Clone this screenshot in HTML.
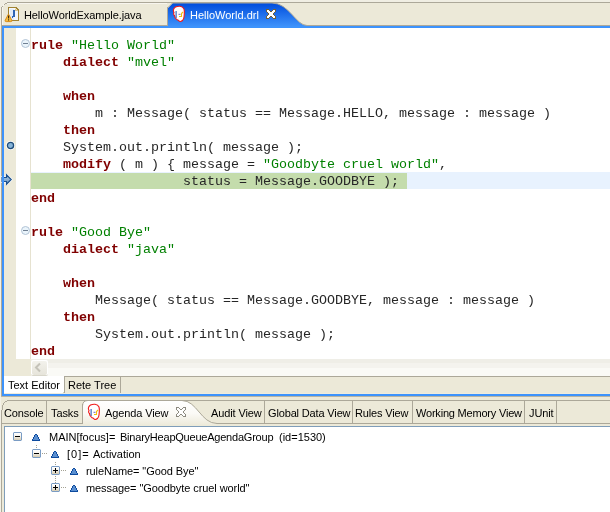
<!DOCTYPE html>
<html><head><meta charset="utf-8">
<style>
*{margin:0;padding:0;box-sizing:border-box}
html,body{width:610px;height:512px;overflow:hidden;background:#ECE9D8;position:relative;font-family:"Liberation Sans",sans-serif;font-size:11px;color:#000}
.a{position:absolute}
.t{position:absolute;line-height:13px;white-space:nowrap;will-change:transform}
pre{font-family:"Liberation Mono",monospace;font-size:13.33px;line-height:17px;white-space:pre;will-change:transform;color:#262626}
.k{color:#800000;font-weight:bold}
.s{color:#008000}
svg{position:absolute;overflow:visible}
</style></head><body>

<!-- ============ TOP TAB BAR ============ -->
<div class="a" style="left:0;top:0;width:1px;height:512px;background:#F3F1E7"></div>
<div class="a" style="left:0;top:0;width:610px;height:2px;background:#F0EEE3"></div>
<svg style="left:0;top:0" width="610" height="30" shape-rendering="crispEdges">
  <!-- top line -->
  <rect x="7" y="2" width="603" height="1" fill="#ACA899"/>
  <!-- inactive tab corner -->
  <rect x="0" y="0" width="7" height="2" fill="#F0EEE3"/>
  <rect x="0" y="2" width="1" height="6" fill="#F0EEE3"/>
  <rect x="1" y="2" width="6" height="1" fill="#F0EEE3"/>
  <rect x="1" y="3" width="4" height="1" fill="#F0EEE3"/>
  <rect x="1" y="4" width="3" height="1" fill="#F0EEE3"/>
  <rect x="1" y="5" width="2" height="1" fill="#F0EEE3"/>
  <rect x="1" y="6" width="1" height="1" fill="#F0EEE3"/>
  <rect x="5" y="3" width="2" height="1" fill="#ACA899"/>
  <rect x="4" y="4" width="1" height="1" fill="#ACA899"/>
  <rect x="3" y="5" width="1" height="1" fill="#ACA899"/>
  <rect x="2" y="6" width="1" height="1" fill="#ACA899"/>
  <rect x="1" y="7" width="1" height="389" fill="#ACA899"/>
  <rect x="2" y="7" width="1" height="18" fill="#F7F5EE"/>
  <rect x="3" y="4" width="1" height="2" fill="#F7F5EE"/>
  <rect x="5" y="3" width="0" height="0" fill="#F7F5EE"/>
  <rect x="7" y="3" width="160" height="1" fill="#F7F5EE"/>
  <!-- inactive tab right + bottom -->
  <rect x="167" y="7" width="1" height="19" fill="#ACA899"/>
  <rect x="1" y="25" width="609" height="1" fill="#ACA899"/>
</svg>
<!-- active tab -->
<svg style="left:0;top:0" width="610" height="28">
  <defs><linearGradient id="g1" x1="0" y1="0" x2="0" y2="1">
  <stop offset="0" stop-color="#004CDC"/><stop offset="1" stop-color="#3D91FA"/></linearGradient></defs>
  <path d="M168 26 L168 8 L173 3 L272 3 C289 3 296 25.5 307 25.5 L308 26 Z" fill="url(#g1)"/>
  <path d="M168 7.5 L172.5 3 L272 3 C289 3 296 25.5 307 25.5 L610 25.5" fill="none" stroke="#ACA899" stroke-width="1"/>
</svg>

<!-- java icon -->
<svg style="left:0;top:0" width="24" height="26" shape-rendering="crispEdges">
  <path d="M8 7 H16 L19 10 V21 H8 Z" fill="#A08232"/>
  <path d="M9 8 H15 V11 H18 V20 H9 Z" fill="#F2F6FC"/>
  <rect x="10" y="9" width="4" height="11" fill="#E2ECF8"/>
  <rect x="15" y="8" width="1" height="1" fill="#F4E6B8"/>
  <rect x="16" y="9" width="1" height="1" fill="#F4E6B8"/>
  <rect x="15" y="9" width="1" height="2" fill="#D8C490"/>
  <rect x="16" y="10" width="2" height="1" fill="#D8C490"/>
  <rect x="13" y="10" width="2" height="7" fill="#2F64B4"/>
  <rect x="12" y="16" width="2" height="1" fill="#2F64B4"/>
  <rect x="12" y="17" width="1" height="1" fill="#2F64B4"/>
</svg>
<svg style="left:0;top:0" width="24" height="26">
  <path d="M8.5 14 L11.8 20.3 Q12.2 21.6 10.8 21.6 H6.2 Q4.8 21.6 5.2 20.3 Z" fill="#F5BE45" stroke="#D88A14" stroke-width="1" stroke-linejoin="round"/>
  <rect x="8" y="15.5" width="1.1" height="3" fill="#3A2A10"/>
  <rect x="8" y="19.3" width="1.1" height="1.2" fill="#3A2A10"/>
</svg>
<div class="t" style="left:24px;top:9px;letter-spacing:-0.1px">HelloWorldExample.java</div>

<!-- drools icon (editor tab) -->
<svg style="left:172px;top:5px" width="14" height="18">
  <path d="M3.5 2 Q6 1 8 1.3 Q11 1.8 12 4 Q12.6 6 12.3 9 L12 12 Q11.8 14 10.5 15.5 Q9 16.8 7.5 16.3 L6 15 Q5 15 4.3 14 L3 12.5 L2.5 10.5 Q1.5 10 1.6 8.5 L2 7.5 Q1 6 1.5 4.5 Q2 2.8 3.5 2 Z" fill="#fff" stroke="#F01818" stroke-width="1.1"/>
  <rect x="3.6" y="6" width="1" height="7" fill="#1A4FB0"/>
  <rect x="6.5" y="8.8" width="2" height="1" fill="#7060C0"/>
  <path d="M7 11.5 H9.5 V8.5 L11 7" fill="none" stroke="#F0C010" stroke-width="1.1"/>
</svg>
<div class="t" style="left:190px;top:9px;color:#fff">HelloWorld.drl</div>
<!-- close X -->
<svg style="left:266px;top:9px" width="10" height="10" shape-rendering="crispEdges">
  <path d="M0 0h1v1h-1zM1 0h1v1h-1zM2 0h1v1h-1zM7 0h1v1h-1zM8 0h1v1h-1zM9 0h1v1h-1zM0 1h1v1h-1zM3 1h1v1h-1zM6 1h1v1h-1zM9 1h1v1h-1zM0 2h1v1h-1zM4 2h1v1h-1zM5 2h1v1h-1zM9 2h1v1h-1zM1 3h1v1h-1zM8 3h1v1h-1zM2 4h1v1h-1zM7 4h1v1h-1zM2 5h1v1h-1zM7 5h1v1h-1zM1 6h1v1h-1zM8 6h1v1h-1zM0 7h1v1h-1zM4 7h1v1h-1zM5 7h1v1h-1zM9 7h1v1h-1zM0 8h1v1h-1zM3 8h1v1h-1zM6 8h1v1h-1zM9 8h1v1h-1zM0 9h1v1h-1zM1 9h1v1h-1zM2 9h1v1h-1zM7 9h1v1h-1zM8 9h1v1h-1zM9 9h1v1h-1z" fill="#70603A"/>
  <path d="M1 1h1v1h-1zM2 1h1v1h-1zM7 1h1v1h-1zM8 1h1v1h-1zM1 2h1v1h-1zM2 2h1v1h-1zM3 2h1v1h-1zM6 2h1v1h-1zM7 2h1v1h-1zM8 2h1v1h-1zM2 3h1v1h-1zM3 3h1v1h-1zM4 3h1v1h-1zM5 3h1v1h-1zM6 3h1v1h-1zM7 3h1v1h-1zM3 4h1v1h-1zM4 4h1v1h-1zM5 4h1v1h-1zM6 4h1v1h-1zM3 5h1v1h-1zM4 5h1v1h-1zM5 5h1v1h-1zM6 5h1v1h-1zM2 6h1v1h-1zM3 6h1v1h-1zM4 6h1v1h-1zM5 6h1v1h-1zM6 6h1v1h-1zM7 6h1v1h-1zM1 7h1v1h-1zM2 7h1v1h-1zM3 7h1v1h-1zM6 7h1v1h-1zM7 7h1v1h-1zM8 7h1v1h-1zM1 8h1v1h-1zM2 8h1v1h-1zM7 8h1v1h-1zM8 8h1v1h-1z" fill="#fff"/>
</svg>

<!-- ============ EDITOR ============ -->
<svg style="left:0;top:0" width="610" height="400" shape-rendering="crispEdges">
  <rect x="2" y="26" width="608" height="2" fill="#3D93FC"/>
  <rect x="2" y="26" width="2" height="370" fill="#3D93FC"/>
  <rect x="2" y="394" width="608" height="2" fill="#3D93FC"/>
  <rect x="1" y="396" width="609" height="1" fill="#B8B4A2"/>
  <rect x="4" y="393" width="606" height="1" fill="#EFECDD"/>
  <!-- white text area -->
  <rect x="16" y="28" width="594" height="331" fill="#fff"/>
  <rect x="30" y="28" width="1" height="331" fill="#E6E2D0"/>
  <!-- current line / selection -->
  <rect x="31" y="172" width="579" height="17" fill="#E8F2FE"/>
  <rect x="31" y="173" width="376" height="16" fill="#C4DCAC"/>
  <!-- scrollbar track -->
  <rect x="31" y="359" width="579" height="17" fill="#F4F3EE"/>
  <rect x="31" y="359" width="579" height="4" fill="#EFEEE7"/>
  <rect x="31" y="368" width="579" height="8" fill="#FAFAF6"/>
  <!-- bottom tabs row -->
  <rect x="64" y="376" width="546" height="1" fill="#ACA899"/>
  <rect x="4" y="376" width="60" height="17" fill="#fff"/>
  <rect x="64" y="377" width="1" height="16" fill="#ACA899"/>
  <rect x="120" y="377" width="1" height="16" fill="#ACA899"/>
  <rect x="63" y="392" width="1" height="1" fill="#D6D2C2"/>
  <rect x="62" y="393" width="2" height="1" fill="#ECE9D8"/>
</svg>

<pre class="a" style="left:31px;top:37px"><span class="k">rule</span> <span class="s">"Hello World"</span>
    <span class="k">dialect</span> <span class="s">"mvel"</span>

    <span class="k">when</span>
        m : Message( status == Message.HELLO, message : message )
    <span class="k">then</span>
    System.out.println( message );
    <span class="k">modify</span> ( m ) { message = <span class="s">"Goodbyte cruel world"</span>,
                   status = Message.GOODBYE );
<span class="k">end</span>

<span class="k">rule</span> <span class="s">"Good Bye"</span>
    <span class="k">dialect</span> <span class="s">"java"</span>

    <span class="k">when</span>
        Message( status == Message.GOODBYE, message : message )
    <span class="k">then</span>
        System.out.println( message );
<span class="k">end</span></pre>

<!-- fold icons -->
<svg style="left:21px;top:39px" width="9" height="9"><circle cx="4.5" cy="4.5" r="4" fill="#EAF4FB" stroke="#B2C4D6" stroke-width="1"/><rect x="2" y="4" width="5" height="1" fill="#6F7F92"/></svg>
<svg style="left:21px;top:226px" width="9" height="9"><circle cx="4.5" cy="4.5" r="4" fill="#EAF4FB" stroke="#B2C4D6" stroke-width="1"/><rect x="2" y="4" width="5" height="1" fill="#6F7F92"/></svg>

<!-- breakpoint -->
<svg style="left:5px;top:140px" width="11" height="11">
  <circle cx="5.5" cy="5.5" r="4.6" fill="#fff"/>
  <circle cx="5.5" cy="5.5" r="3.1" fill="#86B4D8" stroke="#1E4C7A" stroke-width="1.3"/>
</svg>
<!-- instruction pointer arrow -->
<svg style="left:0;top:172px" width="16" height="18">
  <path d="M2 5.5 H6.5 V2.8 L11.2 7.5 L6.5 12.2 V9.5 H2 Z" fill="none" stroke="#fff" stroke-width="2.6" stroke-linejoin="round"/>
  <defs><linearGradient id="ga" x1="0" y1="0" x2="0" y2="1"><stop offset="0" stop-color="#A6C6E2"/><stop offset="1" stop-color="#6D97C2"/></linearGradient></defs>
  <path d="M2 5.5 H6.5 V2.8 L11.2 7.5 L6.5 12.2 V9.5 H2 Z" fill="url(#ga)" stroke="#1B4F8C" stroke-width="1.2" stroke-linejoin="miter"/>
  <rect x="2" y="0" width="2" height="18" fill="#3D93FC"/>
</svg>

<!-- scroll left button -->
<div class="a" style="left:31px;top:360px;width:17px;height:16px;border-radius:2px;background:#fff;border-bottom:1px solid #D8D6CA"></div>
<div class="a" style="left:32px;top:361px;width:15px;height:14px;border-radius:2px;background:linear-gradient(#F3F2EC,#E6E4DA)"></div>
<svg style="left:32px;top:361px" width="12" height="12"><path d="M8 2.5 L4 6.5 L8 10.5" fill="none" stroke="#C4C2B8" stroke-width="2"/></svg>

<div class="t" style="left:8px;top:379px">Text Editor</div>
<div class="t" style="left:68px;top:379px">Rete Tree</div>

<!-- ============ VIEWS ============ -->
<svg style="left:0;top:0" width="610" height="512" shape-rendering="crispEdges">
  <rect x="1" y="410" width="1" height="102" fill="#ACA899"/>
  <rect x="8" y="400" width="602" height="1" fill="#ACA899"/>
  <rect x="7" y="400" width="1" height="1" fill="#ACA899"/>
  <rect x="5" y="401" width="2" height="1" fill="#ACA899"/>
  <rect x="4" y="402" width="1" height="1" fill="#ACA899"/>
  <rect x="3" y="403" width="1" height="2" fill="#ACA899"/>
  <rect x="2" y="405" width="1" height="5" fill="#ACA899"/>
  <rect x="2" y="423" width="81" height="1" fill="#ACA899"/>
  <rect x="216" y="423" width="394" height="1" fill="#ACA899"/>
  <rect x="46" y="401" width="1" height="22" fill="#ACA899"/>
  <rect x="82" y="404" width="1" height="20" fill="#ACA899"/>
  <rect x="264" y="401" width="1" height="22" fill="#ACA899"/>
  <rect x="352" y="401" width="1" height="22" fill="#ACA899"/>
  <rect x="412" y="401" width="1" height="22" fill="#ACA899"/>
  <rect x="524" y="401" width="1" height="22" fill="#ACA899"/>
  <rect x="556" y="401" width="1" height="22" fill="#ACA899"/>
</svg>
<svg style="left:0;top:0" width="610" height="512">
  <defs><linearGradient id="g2" x1="0" y1="0" x2="0" y2="1">
  <stop offset="0" stop-color="#FFFFFF"/><stop offset="0.5" stop-color="#FBFAF6"/><stop offset="1" stop-color="#ECE9D8"/></linearGradient></defs>
  <path d="M83 426 L83 406 Q83 401 88 401 L182 401 C197 401 201 423.5 217 423.5 L217 426 Z" fill="url(#g2)"/>
  <path d="M82.5 424 L82.5 406 Q82.5 400.5 88 400.5 L182 400.5 C197 400.5 201 423.5 217 423.5" fill="none" stroke="#ACA899" stroke-width="1"/>
</svg>
<div class="t" style="left:4px;top:407px;letter-spacing:-0.12px">Console</div>
<div class="t" style="left:51px;top:407px;letter-spacing:-0.12px">Tasks</div>
<!-- drools icon (view tab) -->
<svg style="left:87px;top:403px" width="14" height="18">
  <path d="M3.5 2 Q6 1 8 1.3 Q11 1.8 12 4 Q12.6 6 12.3 9 L12 12 Q11.8 14 10.5 15.5 Q9 16.8 7.5 16.3 L6 15 Q5 15 4.3 14 L3 12.5 L2.5 10.5 Q1.5 10 1.6 8.5 L2 7.5 Q1 6 1.5 4.5 Q2 2.8 3.5 2 Z" fill="#fff" stroke="#F01818" stroke-width="1.1"/>
  <rect x="3.6" y="6" width="1" height="7" fill="#1A4FB0"/>
  <rect x="6.5" y="8.8" width="2" height="1" fill="#7060C0"/>
  <path d="M7 11.5 H9.5 V8.5 L11 7" fill="none" stroke="#F0C010" stroke-width="1.1"/>
</svg>
<div class="t" style="left:105px;top:407px;letter-spacing:-0.12px">Agenda View</div>
<svg style="left:176px;top:407px" width="10" height="10" shape-rendering="crispEdges">
  <path d="M0 0h1v1h-1zM1 0h1v1h-1zM2 0h1v1h-1zM7 0h1v1h-1zM8 0h1v1h-1zM9 0h1v1h-1zM0 1h1v1h-1zM3 1h1v1h-1zM6 1h1v1h-1zM9 1h1v1h-1zM0 2h1v1h-1zM4 2h1v1h-1zM5 2h1v1h-1zM9 2h1v1h-1zM1 3h1v1h-1zM8 3h1v1h-1zM2 4h1v1h-1zM7 4h1v1h-1zM2 5h1v1h-1zM7 5h1v1h-1zM1 6h1v1h-1zM8 6h1v1h-1zM0 7h1v1h-1zM4 7h1v1h-1zM5 7h1v1h-1zM9 7h1v1h-1zM0 8h1v1h-1zM3 8h1v1h-1zM6 8h1v1h-1zM9 8h1v1h-1zM0 9h1v1h-1zM1 9h1v1h-1zM2 9h1v1h-1zM7 9h1v1h-1zM8 9h1v1h-1zM9 9h1v1h-1z" fill="#8C8A80"/>
  <path d="M1 1h1v1h-1zM2 1h1v1h-1zM7 1h1v1h-1zM8 1h1v1h-1zM1 2h1v1h-1zM2 2h1v1h-1zM3 2h1v1h-1zM6 2h1v1h-1zM7 2h1v1h-1zM8 2h1v1h-1zM2 3h1v1h-1zM3 3h1v1h-1zM4 3h1v1h-1zM5 3h1v1h-1zM6 3h1v1h-1zM7 3h1v1h-1zM3 4h1v1h-1zM4 4h1v1h-1zM5 4h1v1h-1zM6 4h1v1h-1zM3 5h1v1h-1zM4 5h1v1h-1zM5 5h1v1h-1zM6 5h1v1h-1zM2 6h1v1h-1zM3 6h1v1h-1zM4 6h1v1h-1zM5 6h1v1h-1zM6 6h1v1h-1zM7 6h1v1h-1zM1 7h1v1h-1zM2 7h1v1h-1zM3 7h1v1h-1zM6 7h1v1h-1zM7 7h1v1h-1zM8 7h1v1h-1zM1 8h1v1h-1zM2 8h1v1h-1zM7 8h1v1h-1zM8 8h1v1h-1z" fill="#fff"/>
</svg>
<div class="t" style="left:211px;top:407px;letter-spacing:-0.12px">Audit View</div>
<div class="t" style="left:268px;top:407px;letter-spacing:-0.15px">Global Data View</div>
<div class="t" style="left:355px;top:407px;letter-spacing:-0.15px">Rules View</div>
<div class="t" style="left:416px;top:407px;letter-spacing:-0.2px">Working Memory View</div>
<div class="t" style="left:529px;top:407px;letter-spacing:-0.12px">JUnit</div>

<!-- tree -->
<svg style="left:0;top:0" width="610" height="512" shape-rendering="crispEdges">
  <rect x="4" y="426" width="606" height="86" fill="#7F9DB9"/>
  <rect x="5" y="427" width="605" height="85" fill="#fff"/>
</svg>
<svg style="left:0;top:0" width="610" height="512" shape-rendering="crispEdges">
<defs><linearGradient id="gb" x1="0" y1="0" x2="0" y2="1"><stop offset="0" stop-color="#FFFFFF"/><stop offset="0.45" stop-color="#F6F4EE"/><stop offset="1" stop-color="#D4CAB0"/></linearGradient></defs>
<g transform="translate(13,432)"><rect x="0" y="0" width="9" height="9" fill="#7A9CC4"/><rect x="0" y="0" width="1" height="1" fill="#C8D6E6"/><rect x="8" y="0" width="1" height="1" fill="#C8D6E6"/><rect x="0" y="8" width="1" height="1" fill="#C8D6E6"/><rect x="8" y="8" width="1" height="1" fill="#C8D6E6"/><rect x="1" y="1" width="7" height="7" fill="url(#gb)"/><rect x="2" y="4" width="5" height="1" fill="#000"/></g><g transform="translate(32,434)"><path d="M3 0h2v1h-2zM2 1h4v2h-4zM1 3h6v2h-6zM0 5h8v2h-8z" fill="#0D4A9E"/><path d="M3 1h2v2h-2zM2 3h4v2h-4zM1 5h6v1h-6z" fill="#5A8FD0"/></g>
<rect x="36" y="445" width="1" height="1" fill="#A4A294"/><rect x="36" y="447" width="1" height="1" fill="#A4A294"/>
<g transform="translate(32,449)"><rect x="0" y="0" width="9" height="9" fill="#7A9CC4"/><rect x="0" y="0" width="1" height="1" fill="#C8D6E6"/><rect x="8" y="0" width="1" height="1" fill="#C8D6E6"/><rect x="0" y="8" width="1" height="1" fill="#C8D6E6"/><rect x="8" y="8" width="1" height="1" fill="#C8D6E6"/><rect x="1" y="1" width="7" height="7" fill="url(#gb)"/><rect x="2" y="4" width="5" height="1" fill="#000"/></g><rect x="42" y="453" width="1" height="1" fill="#A4A294"/><rect x="44" y="453" width="1" height="1" fill="#A4A294"/><rect x="46" y="453" width="1" height="1" fill="#A4A294"/><g transform="translate(51,451)"><path d="M3 0h2v1h-2zM2 1h4v2h-4zM1 3h6v2h-6zM0 5h8v2h-8z" fill="#0D4A9E"/><path d="M3 1h2v2h-2zM2 3h4v2h-4zM1 5h6v1h-6z" fill="#5A8FD0"/></g>
<rect x="55" y="462" width="1" height="1" fill="#A4A294"/><rect x="55" y="464" width="1" height="1" fill="#A4A294"/>
<g transform="translate(51,466)"><rect x="0" y="0" width="9" height="9" fill="#7A9CC4"/><rect x="0" y="0" width="1" height="1" fill="#C8D6E6"/><rect x="8" y="0" width="1" height="1" fill="#C8D6E6"/><rect x="0" y="8" width="1" height="1" fill="#C8D6E6"/><rect x="8" y="8" width="1" height="1" fill="#C8D6E6"/><rect x="1" y="1" width="7" height="7" fill="url(#gb)"/><rect x="2" y="4" width="5" height="1" fill="#000"/><rect x="4" y="2" width="1" height="5" fill="#000"/></g><rect x="61" y="470" width="1" height="1" fill="#A4A294"/><rect x="63" y="470" width="1" height="1" fill="#A4A294"/><rect x="65" y="470" width="1" height="1" fill="#A4A294"/><g transform="translate(70,468)"><path d="M3 0h2v1h-2zM2 1h4v2h-4zM1 3h6v2h-6zM0 5h8v2h-8z" fill="#0D4A9E"/><path d="M3 1h2v2h-2zM2 3h4v2h-4zM1 5h6v1h-6z" fill="#5A8FD0"/></g>
<rect x="55" y="476" width="1" height="1" fill="#A4A294"/><rect x="55" y="478" width="1" height="1" fill="#A4A294"/><rect x="55" y="480" width="1" height="1" fill="#A4A294"/><rect x="55" y="482" width="1" height="1" fill="#A4A294"/>
<g transform="translate(51,483)"><rect x="0" y="0" width="9" height="9" fill="#7A9CC4"/><rect x="0" y="0" width="1" height="1" fill="#C8D6E6"/><rect x="8" y="0" width="1" height="1" fill="#C8D6E6"/><rect x="0" y="8" width="1" height="1" fill="#C8D6E6"/><rect x="8" y="8" width="1" height="1" fill="#C8D6E6"/><rect x="1" y="1" width="7" height="7" fill="url(#gb)"/><rect x="2" y="4" width="5" height="1" fill="#000"/><rect x="4" y="2" width="1" height="5" fill="#000"/></g><rect x="61" y="487" width="1" height="1" fill="#A4A294"/><rect x="63" y="487" width="1" height="1" fill="#A4A294"/><rect x="65" y="487" width="1" height="1" fill="#A4A294"/><g transform="translate(70,485)"><path d="M3 0h2v1h-2zM2 1h4v2h-4zM1 3h6v2h-6zM0 5h8v2h-8z" fill="#0D4A9E"/><path d="M3 1h2v2h-2zM2 3h4v2h-4zM1 5h6v1h-6z" fill="#5A8FD0"/></g>
</svg>
<div class="t" style="left:49px;top:431px">MAIN[focus]=</div><div class="t" style="left:120px;top:431px;letter-spacing:-0.22px">BinaryHeapQueueAgendaGroup</div><div class="t" style="left:279px;top:431px">(id=1530)</div>
<div class="t" style="left:67px;top:448px;letter-spacing:1px">[0]=</div><div class="t" style="left:93px;top:448px">Activation</div>
<div class="t" style="left:86px;top:465px;letter-spacing:-0.08px">ruleName= "Good Bye"</div>
<div class="t" style="left:86px;top:482px;letter-spacing:-0.08px">message= "Goodbyte cruel world"</div>

</body></html>
